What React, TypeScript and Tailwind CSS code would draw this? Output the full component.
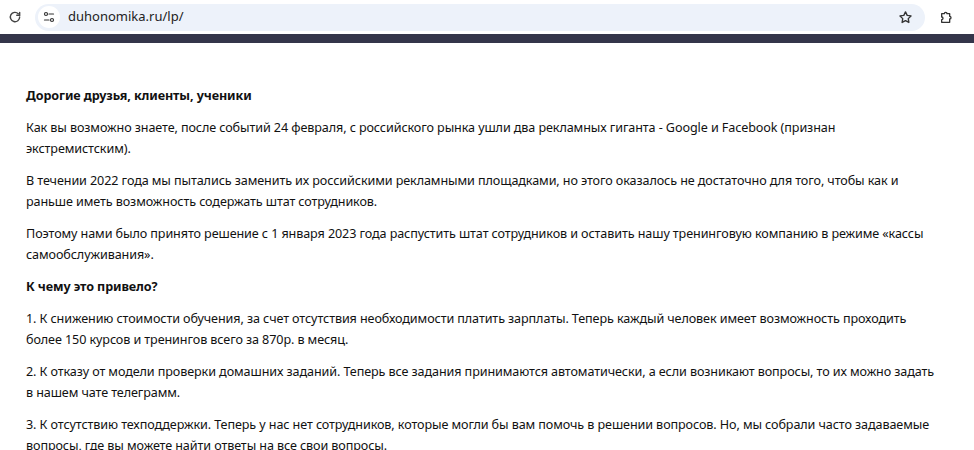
import React from 'react';

const P = ({ children }: { children: React.ReactNode }) => (
  <p className="mb-[11px] leading-[21px] whitespace-nowrap">{children}</p>
);

export default function App() {
  return (
    <div className="w-[974px] h-[450px] overflow-hidden bg-white text-[#111] text-[12.6px]" style={{ fontFamily: '"Noto Sans", "Open Sans", sans-serif' }}>
      <div className="h-[34px] flex items-center bg-white">
        <svg className="ml-[8px] w-[14px] h-[14px]" viewBox="0 0 24 24" fill="none" stroke="#444" strokeWidth="2.4" strokeLinecap="round">
          <path d="M20 12a8 8 0 1 1-2.4-5.7" />
          <path d="M20 4v5h-5" />
        </svg>
        <div className="ml-[13px] w-[890px] h-[27px] rounded-full bg-[#edf2fa] flex items-center">
          <div className="ml-[3px] w-[22px] h-[22px] rounded-full bg-white flex items-center justify-center">
            <svg className="w-[12px] h-[12px]" viewBox="0 0 24 24" fill="none" stroke="#333" strokeWidth="2.4" strokeLinecap="round">
              <circle cx="6" cy="6" r="3" /><path d="M12 6h9" /><circle cx="18" cy="18" r="3" /><path d="M3 18h9" />
            </svg>
          </div>
          <span className="ml-[8px] text-[13px] text-[#222]">duhonomika.ru/lp/</span>
          <svg className="ml-auto mr-[12px] w-[15px] h-[15px]" viewBox="0 0 24 24" fill="none" stroke="#333" strokeWidth="2.2" strokeLinejoin="round">
            <path d="M12 3l2.7 5.6 6.1.9-4.4 4.3 1 6.1L12 17l-5.4 2.9 1-6.1-4.4-4.3 6.1-.9z" />
          </svg>
        </div>
        <svg className="ml-[14px] w-[16px] h-[16px]" viewBox="0 0 24 24" fill="none" stroke="#333" strokeWidth="2" strokeLinejoin="round">
          <path d="M4 7h4a2 2 0 1 1 4 0h4v4a2 2 0 1 1 0 4v5H4v-4a2 2 0 1 0 0-4z" />
        </svg>
      </div>
      <div className="h-[9px] bg-[#34354a]" />
      <div className="pl-[26px] pt-[42px] tracking-[-0.1px]">
        <P><b>Дорогие друзья, клиенты, ученики</b></P>
        <P>Как вы возможно знаете, после событий 24 февраля, с российского рынка ушли два рекламных гиганта - Google и Facebook (признан<br />экстремистским).</P>
        <P>В течении 2022 года мы пытались заменить их российскими рекламными площадками, но этого оказалось не достаточно для того, чтобы как и<br />раньше иметь возможность содержать штат сотрудников.</P>
        <P>Поэтому нами было принято решение с 1 января 2023 года распустить штат сотрудников и оставить нашу тренинговую компанию в режиме «кассы<br />самообслуживания».</P>
        <P><b>К чему это привело?</b></P>
        <P>1. К снижению стоимости обучения, за счет отсутствия необходимости платить зарплаты. Теперь каждый человек имеет возможность проходить<br />более 150 курсов и тренингов всего за 870р. в месяц.</P>
        <P>2. К отказу от модели проверки домашних заданий. Теперь все задания принимаются автоматически, а если возникают вопросы, то их можно задать<br />в нашем чате телеграмм.</P>
        <P>3. К отсутствию техподдержки. Теперь у нас нет сотрудников, которые могли бы вам помочь в решении вопросов. Но, мы собрали часто задаваемые<br />вопросы, где вы можете найти ответы на все свои вопросы.</P>
      </div>
    </div>
  );
}
